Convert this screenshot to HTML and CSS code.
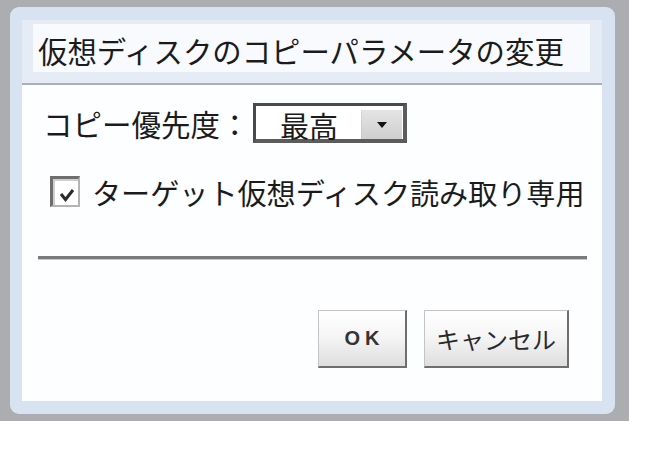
FILE: index.html
```html
<!DOCTYPE html>
<html lang="ja">
<head>
<meta charset="utf-8">
<title>仮想ディスクのコピーパラメータの変更</title>
<link rel="stylesheet" href="styles.css">
</head>
<body>
<div class="desk">
  <div class="frame">
    <div class="panel">
      <div class="titlebar">
        <div class="title">仮想ディスクのコピーパラメータの変更</div>
      </div>
      <div class="content">
        <div class="row row-priority">
          <span class="label">コピー優先度：</span>
          <div class="select">
            <span class="select-value">最高</span>
            <span class="select-btn"><span class="arrow"></span></span>
          </div>
        </div>
        <div class="row row-check">
          <span class="checkbox">
            <svg width="16" height="14" viewBox="0 0 16 14"><path d="M2 6 L6.5 11.5 L14 2" fill="none" stroke="#2a2a2a" stroke-width="3"/></svg>
          </span>
          <span class="check-label">ターゲット仮想ディスク読み取り専用</span>
        </div>
        <div class="separator"></div>
        <div class="buttons">
          <button class="btn btn-ok">OK</button>
          <button class="btn btn-cancel">キャンセル</button>
        </div>
      </div>
    </div>
  </div>
</div>
</body>
</html>
```
FILE: styles.css
```css
html, body {
  margin: 0;
  padding: 0;
  background: #ffffff;
}
body {
  font-family: "Noto Sans CJK JP", "Noto Sans", sans-serif;
  color: #1b1b1b;
}
.desk {
  width: 629px;
  height: 421px;
  box-sizing: border-box;
  padding: 7px 14px 7px 10px;
  background: #abadb1;
}
.frame {
  height: 100%;
  box-sizing: border-box;
  padding: 13px 13px 13px 12px;
  background: #d7e3f1;
  border-radius: 9px;
}
.panel {
  height: 100%;
  background: #fdfeff;
  display: flex;
  flex-direction: column;
}
.titlebar {
  height: 65px;
  box-sizing: border-box;
  padding: 4px 12px 13px 11px;
  background: #e5ecf5;
  border-bottom: 2px solid #a9b0ba;
}
.title {
  height: 48px;
  box-sizing: border-box;
  padding: 12px 0 0 5px;
  background: #f8fafd;
  font-size: 29.4px;
  line-height: 29px;
  white-space: nowrap;
}
.content {
  flex: 1;
  padding: 0 15px 0 16px;
  display: flex;
  flex-direction: column;
}
.row {
  display: flex;
  align-items: center;
}
.row-priority {
  margin-top: 18px;
  padding-left: 5px;
}
.label {
  font-size: 29.5px;
  line-height: 30px;
  white-space: nowrap;
  width: 210px;
}
.select {
  width: 154px;
  height: 40px;
  box-sizing: border-box;
  border-top: 3px solid #4a4a4a;
  border-left: 3px solid #4a4a4a;
  border-right: 4px solid #5c5c5c;
  border-bottom: 4px solid #5c5c5c;
  background: #ffffff;
  display: flex;
}
.select-value {
  flex: 1;
  padding-left: 24px;
  padding-top: 5px;
  font-size: 29px;
  line-height: 29px;
}
.select-btn {
  width: 40px;
  margin: 4px 1px 0 0;
  height: 29px;
  background: linear-gradient(#e4e4e4, #cfcfcf);
  border-left: 1px dotted #c8c8c8;
  display: flex;
  align-items: center;
  justify-content: center;
}
.arrow {
  width: 0;
  height: 0;
  border-left: 5px solid transparent;
  border-right: 5px solid transparent;
  border-top: 6px solid #111;
}
.row-check {
  margin-top: 33px;
  padding-left: 12px;
}
.checkbox {
  width: 30px;
  height: 31px;
  box-sizing: border-box;
  border-top: 3px solid #6e6e6e;
  border-left: 3px solid #6e6e6e;
  border-right: 2px solid #b4b4b4;
  border-bottom: 2px solid #b4b4b4;
  box-shadow: inset 2px 2px 0 #cfcfcf;
  background: #fff;
  display: flex;
  align-items: center;
  justify-content: center;
  padding-top: 5px;
  padding-left: 2px;
}
.check-label {
  margin-left: 12px;
  font-size: 29.1px;
  line-height: 30px;
  white-space: nowrap;
}
.separator {
  margin-top: 49px;
  height: 3px;
  background: #7a7a7a;
  border-bottom: 1px solid #c9c9c9;
}
.buttons {
  margin-top: 50px;
  padding-right: 18px;
  display: flex;
  justify-content: flex-end;
  gap: 17px;
}
.btn {
  height: 58px;
  box-sizing: border-box;
  border-top: 1px solid #c4c4c4;
  border-left: 1px solid #c4c4c4;
  border-right: 2px solid #6e6e6e;
  border-bottom: 2px solid #6e6e6e;
  background: linear-gradient(#ffffff 0%, #f6f6f6 45%, #dedede 100%);
  color: #2a2a2a;
  padding: 0;
  margin: 0;
  font-family: "Noto Sans CJK JP", "Noto Sans", sans-serif;
}
.btn-ok {
  width: 89px;
  font-family: "Liberation Sans", Arial, sans-serif;
  font-weight: bold;
  font-size: 20px;
  letter-spacing: 5px;
  padding-left: 5px;
  color: #333;
}
.btn-cancel {
  width: 145px;
  font-size: 24px;
}
```
